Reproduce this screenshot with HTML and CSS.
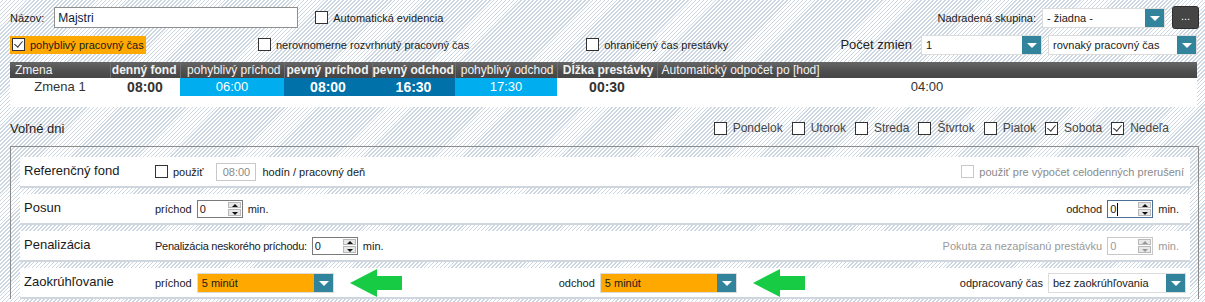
FILE: index.html
```html
<!DOCTYPE html>
<html lang="sk">
<head>
    <meta charset="UTF-8">
    <title>Pracovný čas</title>
    <link rel="stylesheet" href="styles.css">
</head>
<body>
<div class="top-row first">
    <span class="lbl">Názov:</span>
    <input class="name-input" type="text" value="Majstri">
    <label class="check auto-ev"><span class="box"></span>Automatická evidencia</label>
    <div class="right-group">
        <span class="lbl">Nadradená skupina:</span>
        <div class="select parent-sel"><span class="val">- žiadna -</span><span class="arrow"></span></div>
        <button class="dots">...</button>
    </div>
</div>

<div class="top-row second">
    <label class="check hl"><span class="box checked"></span>pohyblivý pracovný čas</label>
    <label class="check uneven"><span class="box"></span>nerovnomerne rozvrhnutý pracovný čas</label>
    <label class="check limited"><span class="box"></span>ohraničený čas prestávky</label>
    <div class="right-group">
        <span class="lbl big">Počet zmien</span>
        <div class="select count-sel"><span class="val">1</span><span class="arrow"></span></div>
        <div class="select type-sel"><span class="val">rovnaký pracovný čas</span><span class="arrow"></span></div>
    </div>
</div>

<div class="grid">
    <table class="shifts">
        <colgroup>
            <col style="width: 100px">
            <col style="width: 70px">
            <col style="width: 104px">
            <col style="width: 88px">
            <col style="width: 83px">
            <col style="width: 102px">
            <col style="width: 100px">
            <col>
        </colgroup>
        <tr>
            <th class="c-name">Zmena</th>
            <th class="b">denný fond</th>
            <th>pohyblivý príchod</th>
            <th class="b">pevný príchod</th>
            <th class="b">pevný odchod</th>
            <th>pohyblivý odchod</th>
            <th class="b">Dĺžka prestávky</th>
            <th class="c-auto">Automatický odpočet po [hod]</th>
        </tr>
        <tr>
            <td>Zmena 1</td>
            <td class="b">08:00</td>
            <td class="light">06:00</td>
            <td class="dark b">08:00</td>
            <td class="dark b">16:30</td>
            <td class="light">17:30</td>
            <td class="b">00:30</td>
            <td>04:00</td>
        </tr>
    </table>
</div>

<div class="free-days">
    <span class="title">Voľné dni</span>
    <div class="days">
        <label class="check"><span class="box"></span>Pondelok</label>
        <label class="check"><span class="box"></span>Utorok</label>
        <label class="check"><span class="box"></span>Streda</label>
        <label class="check"><span class="box"></span>Štvrtok</label>
        <label class="check"><span class="box"></span>Piatok</label>
        <label class="check"><span class="box checked"></span>Sobota</label>
        <label class="check"><span class="box checked"></span>Nedeľa</label>
    </div>
</div>

<div class="panel">
    <div class="prow">
        <span class="plabel">Referenčný fond</span>
        <label class="check"><span class="box"></span>použiť</label>
        <span class="time-box">08:00</span>
        <span class="txt">hodín / pracovný deň</span>
        <label class="check disabled right"><span class="box"></span>použiť pre výpočet celodenných prerušení</label>
    </div>
    <div class="prow">
        <span class="plabel">Posun</span>
        <span class="txt">príchod</span>
        <div class="spin"><span class="num">0</span><span class="btns"><i class="up"></i><i class="down"></i></span></div>
        <span class="txt">min.</span>
        <span class="txt right">odchod</span>
        <div class="spin focus"><span class="num">0<b class="caret"></b></span><span class="btns"><i class="up"></i><i class="down"></i></span></div>
        <span class="txt">min.</span>
    </div>
    <div class="prow">
        <span class="plabel">Penalizácia</span>
        <span class="txt narrow">Penalizácia neskorého príchodu:</span>
        <div class="spin"><span class="num">0</span><span class="btns"><i class="up"></i><i class="down"></i></span></div>
        <span class="txt">min.</span>
        <span class="txt grey right">Pokuta za nezapísanú prestávku</span>
        <div class="spin disabled"><span class="num">0</span><span class="btns"><i class="up"></i><i class="down"></i></span></div>
        <span class="txt grey">min.</span>
    </div>
    <div class="prow">
        <span class="plabel">Zaokrúhľovanie</span>
        <span class="txt">príchod</span>
        <div class="select orange"><span class="val">5 minút</span><span class="arrow"></span></div>
        <svg class="green-arrow" width="52" height="30" viewBox="0 0 52 30"><polygon points="0,15 27,1 27,8 52,8 52,22 27,22 27,29" fill="#17cc44"/></svg>
        <span class="txt odchod-lbl">odchod</span>
        <div class="select orange"><span class="val">5 minút</span><span class="arrow"></span></div>
        <svg class="green-arrow" width="52" height="30" viewBox="0 0 52 30"><polygon points="0,15 27,1 27,8 52,8 52,22 27,22 27,29" fill="#17cc44"/></svg>
        <span class="txt right">odpracovaný čas</span>
        <div class="select worked"><span class="val">bez zaokrúhľovania</span><span class="arrow"></span></div>
    </div>
</div>
</body>
</html>
```

FILE: styles.css
```css
body {
    margin: 0;
    padding: 0;
    font-family: "Liberation Sans", Arial, sans-serif;
    font-size: 11px;
    color: #1a1a1a;
    background-color: #fff;
    background-image: repeating-linear-gradient(135deg, #fff 0, #fff 1.6px, #cdd7e1 1.6px, #cdd7e1 2.8px);
    height: 302px;
    overflow: hidden;
}

/* horne riadky */
.top-row {
    display: flex;
    align-items: center;
    padding: 0 6px 0 10px;
}

.top-row.first {
    height: 21px;
    padding-top: 7px;
}

.top-row.second {
    height: 19px;
    margin-top: 7px;
}

.right-group {
    margin-left: auto;
    display: flex;
    align-items: center;
}

.lbl {
    color: #1a1a1a;
}

.lbl.big {
    font-size: 13px;
    color: #222;
    margin-right: 9px;
}

.name-input {
    margin-left: 10px;
    width: 244px;
    height: 21px;
    box-sizing: border-box;
    border: 1px solid #8f8f8f;
    padding: 0 3px;
    font-family: "Liberation Sans", Arial, sans-serif;
    font-size: 12px;
    color: #0a1a3a;
}

.check {
    display: inline-flex;
    align-items: center;
    white-space: nowrap;
}

.box {
    width: 13px;
    height: 13px;
    box-sizing: border-box;
    border: 1px solid #333;
    background: #fff;
    margin-right: 5px;
    flex: none;
    position: relative;
}

.box.checked::after {
    content: "";
    position: absolute;
    left: 3px;
    top: 0px;
    width: 4px;
    height: 7px;
    border-right: 1.3px solid #333;
    border-bottom: 1.3px solid #333;
    transform: rotate(40deg);
}

.auto-ev {
    margin-left: 17px;
}

.hl {
    background: #ffa800;
    height: 18px;
    width: 136px;
    padding-left: 2px;
    box-sizing: border-box;
}

.uneven {
    margin-left: 112px;
}

.limited {
    margin-left: 117px;
}

/* vyberove polia */
.select {
    display: flex;
    height: 20px;
    box-sizing: border-box;
    border: 1px solid #dcdcdc;
    background: #fff;
    font-size: 11px;
}

.select .val {
    flex: 1;
    padding-left: 4px;
    line-height: 18px;
    white-space: nowrap;
    overflow: hidden;
}

.select .arrow {
    width: 19px;
    background: #31849b;
    position: relative;
}

.select .arrow::after {
    content: "";
    position: absolute;
    left: 5px;
    top: 7px;
    border-left: 5px solid transparent;
    border-right: 5px solid transparent;
    border-top: 5px solid #fff;
}

.parent-sel {
    width: 123px;
    margin-left: 6px;
}

.dots {
    margin-left: 7px;
    width: 27px;
    height: 23px;
    background: #454545;
    border: 1px solid #2e2e2e;
    border-radius: 3px;
    color: #fff;
    font-size: 11px;
    padding: 0 0 3px;
    font-family: "Liberation Sans", Arial, sans-serif;
}

.count-sel {
    width: 121px;
}

.type-sel {
    width: 149px;
    margin-left: 6px;
    margin-right: 2px;
}

/* tabulka zmien */
.grid {
    margin: 8px 8px 0 10px;
    background: #fff;
    height: 45px;
}

.shifts {
    width: 100%;
    table-layout: fixed;
    border-collapse: collapse;
    font-family: "Liberation Sans", Arial, sans-serif;
    font-size: 12px;
}

.shifts th {
    height: 16px;
    padding: 0 3px 0 0;
    background: linear-gradient(#666, #4e4e4e 60%, #454545);
    color: #f2f2f2;
    font-weight: normal;
    text-align: right;
    border-left: 1px solid #6e6e6e;
    white-space: nowrap;
    overflow: hidden;
    line-height: 16px;
}

.shifts th.b {
    font-weight: bold;
}

.shifts th.c-name {
    text-align: left;
    border-left: none;
    padding-left: 5px;
}

.shifts th.c-auto {
    text-align: left;
    padding-left: 4px;
}

.shifts td {
    height: 18px;
    padding: 0;
    text-align: center;
    color: #333;
    font-size: 13px;
    line-height: 18px;
}

.shifts td.b {
    font-weight: bold;
    font-size: 14px;
}

.shifts td.light {
    background: #00adee;
    color: #fff;
}

.shifts td.dark {
    background: #0071a9;
    color: #fff;
}

/* volne dni */
.free-days {
    display: flex;
    align-items: center;
    margin: 12px 36px 0 10px;
    height: 18px;
}

.free-days .title {
    font-size: 13px;
    color: #222;
}

.days {
    margin-left: auto;
    display: flex;
    font-size: 12px;
    color: #454545;
}

.days .check {
    margin-left: 9px;
}

.days .box {
    margin-right: 6px;
}

/* panel */
.panel {
    margin: 9px 6px 0 10px;
    border: 1px solid #8c8c8c;
    border-bottom: none;
    padding: 10px 8px 0 9px;
    display: flex;
    flex-direction: column;
    gap: 6px;
}

.prow {
    display: flex;
    align-items: center;
    height: 29px;
    background: #fff;
    border-bottom: 2px solid #cfd6de;
    padding: 0 6px 0 4px;
}

.plabel {
    width: 131px;
    font-size: 13px;
    color: #1a1a1a;
    padding-bottom: 2px;
}

.txt {
    white-space: nowrap;
    margin-right: 5px;
}

.txt.narrow {
    letter-spacing: -0.25px;
}

.txt.grey {
    color: #9a9a9a;
}

.right {
    margin-left: auto;
}

.check.disabled {
    color: #8a8a8a;
}

.check.disabled .box {
    border-color: #c8c8c8;
}

.time-box {
    margin: 0 6px 0 13px;
    width: 40px;
    height: 18px;
    box-sizing: border-box;
    border: 1px solid #c8c8c8;
    color: #8a8a8a;
    text-align: center;
    line-height: 16px;
    font-size: 11px;
}

.spin {
    display: flex;
    width: 46px;
    height: 18px;
    box-sizing: border-box;
    border: 1px solid #7a7a7a;
    background: #fff;
    margin-right: 5px;
}

.spin.focus {
    border-color: #4a6e94;
}

.spin.disabled {
    border-color: #c8c8c8;
    color: #9a9a9a;
}

.spin .num {
    flex: 1;
    padding-left: 2px;
    line-height: 16px;
    position: relative;
}

.caret {
    display: inline-block;
    width: 1px;
    height: 13px;
    background: #000;
    vertical-align: middle;
    margin-left: 1px;
}

.spin .btns {
    width: 13px;
    display: flex;
    flex-direction: column;
    gap: 1px;
    padding: 1px 1px 1px 0;
}

.spin .btns i {
    flex: 1;
    background: #e8e8e8;
    border: 1px solid #b8b8b8;
    position: relative;
}

.spin .btns i::after {
    content: "";
    position: absolute;
    left: 3px;
    border-left: 3px solid transparent;
    border-right: 3px solid transparent;
}

.spin .btns i.up::after {
    top: 1px;
    border-bottom: 3px solid #111;
}

.spin .btns i.down::after {
    top: 2px;
    border-top: 3px solid #111;
}

.spin.disabled .btns i.up::after {
    border-bottom-color: #999;
}

.spin.disabled .btns i.down::after {
    border-top-color: #999;
}

.select.orange {
    width: 137px;
    background: #ffa800;
}

.green-arrow {
    margin-left: 16px;
}

.odchod-lbl {
    margin-left: 157px;
}

.select.worked {
    width: 138px;
    margin-right: -2px;
}
```
